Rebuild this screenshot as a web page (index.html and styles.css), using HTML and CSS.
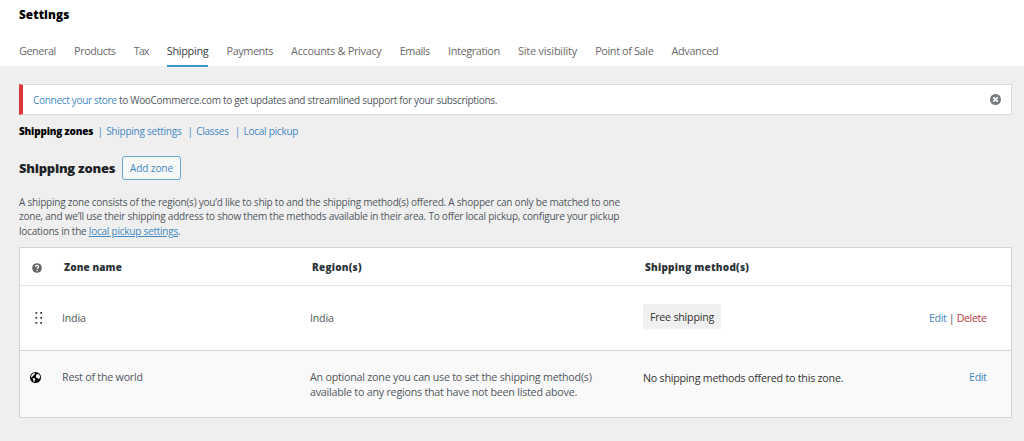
FILE: index.html
```html
<!DOCTYPE html>
<html lang="en">
<head>
<meta charset="utf-8">
<title>Settings</title>
<link rel="stylesheet" href="styles.css">
</head>
<body>
<header class="header">
  <h1 class="page-title">Settings</h1>
  <nav class="tabs">
    <a class="tab">General</a>
    <a class="tab">Products</a>
    <a class="tab tab-narrow">Tax</a>
    <a class="tab tab-active">Shipping</a>
    <a class="tab">Payments</a>
    <a class="tab tab-accounts">Accounts &amp; Privacy</a>
    <a class="tab">Emails</a>
    <a class="tab tab-wide">Integration</a>
    <a class="tab tab-visibility">Site visibility</a>
    <a class="tab tab-wide">Point of Sale</a>
    <a class="tab tab-wide">Advanced</a>
  </nav>
</header>
<main class="content">
  <div class="notice">
    <p class="notice-text"><a class="link">Connect your store</a> to WooCommerce.com to get updates and streamlined support for your subscriptions.</p>
    <svg class="dismiss" viewBox="0 0 10 10"><circle cx="5" cy="5" r="5" fill="#787c82"/><path d="M3 3l4 4M7 3L3 7" stroke="#fff" stroke-width="1.6"/></svg>
  </div>
  <nav class="subnav">
    <a class="sub sub-current">Shipping zones</a><span class="sep sep-first">|</span>
    <a class="sub">Shipping settings</a><span class="sep">|</span>
    <a class="sub">Classes</a><span class="sep">|</span>
    <a class="sub">Local pickup</a>
  </nav>
  <div class="heading">
    <h2 class="section-title">Shipping zones</h2>
    <button class="add-button">Add zone</button>
  </div>
  <p class="description">A shipping zone consists of the region(s) you’d like to ship to and the shipping method(s) offered. A shopper can only be matched to one<br>zone, and we’ll use their shipping address to show them the methods available in their area. To offer local pickup, configure your pickup<br>locations in the <a class="link link-underlined">local pickup settings</a>.</p>
  <section class="zones">
    <div class="row row-head">
      <div class="cell-icon"><svg class="icon-help" viewBox="0 0 10 10"><circle cx="5" cy="5" r="4.8" fill="#666"/><path d="M3.5 3.9c0-2 3.1-1.9 3.1-.1 0 1.1-1.5 1.1-1.5 2.2" fill="none" stroke="#fff" stroke-width="1.2"/><circle cx="5.1" cy="7.6" r=".75" fill="#fff"/></svg></div>
      <div class="head-text">Zone name</div>
      <div class="head-text head-spaced">Region(s)</div>
      <div class="head-text head-spaced">Shipping method(s)</div>
    </div>
    <div class="row row-zone">
      <div class="cell-icon"><svg class="icon-drag" viewBox="0 0 8 12" fill="#333"><path d="M.5 0h1.7v1.7H.5zM5.3 0H7v1.7H5.3zM.5 5h1.7v1.7H.5zM5.3 5H7v1.7H5.3zM.5 10h1.7v1.7H.5zM5.3 10H7v1.7H5.3z"/></svg></div>
      <div class="cell">India</div>
      <div class="cell">India</div>
      <div class="cell-method"><span class="chip">Free shipping</span></div>
      <div class="actions"><a class="link">Edit</a> | <a class="link-delete">Delete</a></div>
    </div>
    <div class="row row-rest">
      <div class="cell-icon"><svg class="icon-globe" viewBox="0 0 10 10"><circle cx="5" cy="5" r="5" fill="#000"/><path d="M.8 4.2L1.6 2.2l2-1.4 1.1.1-.4 1.2-1.1.6.1.9-1.3.6-.4 1zM6.1 2.3l1.5-.7 1.3 1.6.2 2-1.4 1.1-1.1-.9-1.2-.5-.1-1.3zM2.4 5.5l1.8.2.9 1-1 1.2.1 1.3-1.1-.5-.3-1.5z" fill="#f9f9f9"/></svg></div>
      <div class="cell">Rest of the world</div>
      <div class="cell">An optional zone you can use to set the shipping method(s)<br>available to any regions that have not been listed above.</div>
      <div class="cell-method method-none">No shipping methods offered to this zone.</div>
      <div class="actions"><a class="link">Edit</a></div>
    </div>
  </section>
</main>
</body>
</html>
```
FILE: styles.css
```css
* { box-sizing: border-box; }
body {
  margin: 0;
  background: #efefef;
  color: #50575e;
  font-family: "Open Sans", "Noto Sans", sans-serif;
  font-size: 10px;
}
h1, h2, p { margin: 0; }
.header {
  height: 66px;
  padding: 6px 19px 0;
  background: #fff;
}
.page-title {
  font-size: 11.7px;
  line-height: 16px;
  font-weight: 800;
  letter-spacing: 0.1px;
  color: #000;
}
.tabs {
  display: flex;
  gap: 18.2px;
  margin-top: 14px;
}
.tab {
  height: 31px;
  padding-top: 7px;
  font-size: 10.9px;
  line-height: 16px;
  letter-spacing: -0.46px;
  white-space: nowrap;
  color: #6a6a6a;
}
.tab-narrow { letter-spacing: -1px; }
.tab-accounts { letter-spacing: -0.3px; }
.tab-visibility { letter-spacing: -0.2px; }
.tab-wide { letter-spacing: -0.38px; }
.tab-active {
  color: #3c3c3c;
  letter-spacing: -0.3px;
  border-bottom: 2px solid #3f97cf;
}
.content { padding: 18px 12px 0 19px; }
.notice {
  display: flex;
  align-items: center;
  justify-content: space-between;
  height: 31px;
  padding: 0 10px;
  background: #fff;
  border: 1px solid #d9dadc;
  border-left: 4px solid #d9363a;
}
.notice-text {
  line-height: 14px;
  letter-spacing: -0.3px;
  white-space: nowrap;
}
.link { color: #4389c4; }
.link-underlined { text-decoration: underline; }
.link-delete { color: #bb3a3d; }
.dismiss { width: 11px; height: 11px; }
.subnav {
  display: flex;
  height: 32px;
  padding-top: 9px;
  line-height: 14px;
  letter-spacing: -0.24px;
  color: #4389c4;
  white-space: nowrap;
}
.sub-current {
  color: #000;
  font-weight: 800;
  letter-spacing: -0.18px;
}
.sep { margin: 0 3.4px 0 6px; }
.sep-first { margin-left: 4.3px; }
.heading {
  display: flex;
  align-items: center;
  gap: 7px;
  height: 40px;
  margin-top: 1px;
}
.section-title {
  width: 96px;
  font-size: 13px;
  font-weight: 800;
  letter-spacing: -0.25px;
  white-space: nowrap;
  color: #1d2327;
}
.add-button {
  width: 59px;
  height: 24px;
  padding: 0;
  font: inherit;
  letter-spacing: -0.1px;
  color: #4389c4;
  background: #f6f7f7;
  border: 1px solid #6ba5d2;
  border-radius: 3px;
}
.description {
  margin-top: 7px;
  line-height: 14.4px;
  letter-spacing: -0.225px;
  white-space: nowrap;
}
.zones {
  height: 171px;
  margin-top: 9px;
  background: #fff;
  border: 1px solid #d3d4d6;
}
.row {
  display: grid;
  grid-template-columns: 42px 248px 333px 1fr auto;
  padding-right: 24.5px;
}
.row-head {
  height: 38px;
  border-bottom: 1px solid #e0e0e0;
}
.head-text {
  padding: 11px 0 0 2px;
  font-weight: 800;
  line-height: 16px;
  letter-spacing: 0.1px;
  white-space: nowrap;
  color: #2c3338;
}
.head-spaced { letter-spacing: 0.24px; }
.row-zone { height: 65px; border-bottom: 1px solid #d3d4d6; }
.row-rest { height: 66px; background: #f9f9f9; }
.cell, .actions {
  font-size: 10.7px;
  line-height: 15.4px;
  white-space: nowrap;
  letter-spacing: -0.22px;
}
.actions { letter-spacing: -0.4px; }
.row-zone .cell, .row-zone .actions { padding-top: 25px; }
.row-rest .cell, .row-rest .actions { padding-top: 18.5px; }
.cell-method {
  font-size: 10.7px;
  letter-spacing: -0.23px;
  color: #333;
  white-space: nowrap;
}
.chip {
  display: block;
  width: 78px;
  height: 25px;
  margin-top: 18px;
  line-height: 26px;
  text-align: center;
  background: #f0f0f0;
  border-radius: 3px;
}
.method-none { padding-top: 20px; line-height: 15px; }
.icon-help { display: block; width: 10px; height: 10px; margin: 15px 0 0 12px; }
.icon-drag { display: block; width: 8px; height: 12px; margin: 26px 0 0 14.5px; }
.icon-globe { display: block; width: 11px; height: 11px; margin: 21px 0 0 10px; }
```
